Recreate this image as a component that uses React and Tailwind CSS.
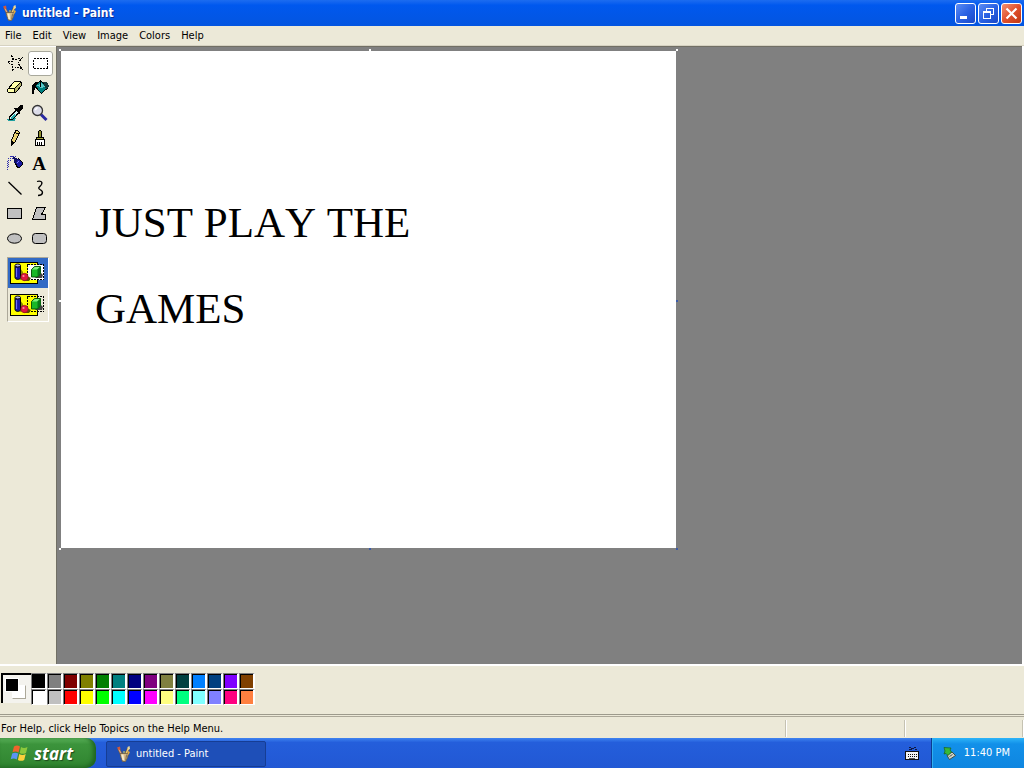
import React from "react";

const UI_FONT = "font-['DejaVu_Sans_Condensed','Noto_Sans',sans-serif]";

const TOP_COLORS = [
  ["Black", "bg-[#000000]"], ["Gray", "bg-[#808080]"], ["Maroon", "bg-[#800000]"], ["Olive", "bg-[#808000]"],
  ["Green", "bg-[#008000]"], ["Teal", "bg-[#008080]"], ["Navy", "bg-[#000080]"], ["Purple", "bg-[#800080]"],
  ["Moss", "bg-[#808040]"], ["Deep teal", "bg-[#004040]"], ["Azure", "bg-[#0080ff]"], ["Steel blue", "bg-[#004080]"],
  ["Violet", "bg-[#8000ff]"], ["Brown", "bg-[#804000]"],
];
const BOTTOM_COLORS = [
  ["White", "bg-[#ffffff]"], ["Silver", "bg-[#c0c0c0]"], ["Red", "bg-[#ff0000]"], ["Yellow", "bg-[#ffff00]"],
  ["Lime", "bg-[#00ff00]"], ["Cyan", "bg-[#00ffff]"], ["Blue", "bg-[#0000ff]"], ["Magenta", "bg-[#ff00ff]"],
  ["Cream", "bg-[#ffff80]"], ["Mint", "bg-[#00ff80]"], ["Ice", "bg-[#80ffff]"], ["Lavender", "bg-[#8080ff]"],
  ["Rose", "bg-[#ff0080]"], ["Orange", "bg-[#ff8040]"],
];

function PaintIcon() {
  return (
    <svg viewBox="0 0 16 16" className="size-4 shrink-0" aria-hidden="true">
      <path d="M2.500 2.500l3.500 7M12.500 2L9.500 9M8 5v4" fill="none" stroke="#6b5a48" strokeWidth="2.600" />
      <path d="M2.500 2.500l3.500 7" stroke="#e0a080" strokeWidth="1.400" />
      <path d="M12.500 2L9.500 9" stroke="#f0cc70" strokeWidth="1.500" />
      <path d="M8 5v4" stroke="#8fc3b0" strokeWidth="1.200" />
      <path d="M1 1.500l3-1 .5 3-2 .5z" fill="#d0583c" />
      <path d="M11.500 1l2-1 .5 3-2 1z" fill="#e8d8a0" />
      <path d="M4 7.500h8.500l-1 4-2 4h-3l-1.500-4z" fill="#d8bc88" stroke="#6b5c45" strokeWidth=".8" />
      <path d="M5.500 8.500l1 5.500h1.500l-.5-5.500z" fill="#f7ecd0" />
      <path d="M10 8.500l-1 6h1l1.500-6z" fill="#8c7b5c" />
      <path d="M12 5l2 1-1.500 3-1-2z" fill="#e0a840" />
    </svg>
  );
}

function ToolSvg({ children, crisp = true }) {
  return (
    <svg viewBox="0 0 25 25" className="size-[25px]" fill="none" stroke="#000" shapeRendering={crisp ? "crispEdges" : "auto"} aria-hidden="true">
      {children}
    </svg>
  );
}

const TOOLS = [
  { name: "Free-Form Select", art: (
    <ToolSvg><path d="M9.500 4.500l2.500 4.500 8-2-4 5 4 6-6-2-4 4 .5-6-5-3 5-1z" strokeDasharray="2 1" /></ToolSvg>
  ) },
  { name: "Select", selected: true, art: (
    <ToolSvg><rect x="5.500" y="7.500" width="14" height="10" strokeDasharray="2 1" /></ToolSvg>
  ) },
  { name: "Eraser", art: (
    <ToolSvg>
      <path d="M5.500 13.500l6-7 1-1h6l1 1v3l-6 7h-7l-1-1z" fill="#ffffa8" />
      <path d="M12.500 13.500l6.500-7v3l-6 7z" fill="#b8b870" stroke="none" />
      <path d="M5.500 12.500h7l6.500-6.500M12.500 13v3" />
    </ToolSvg>
  ) },
  { name: "Fill With Color", art: (
    <ToolSvg>
      <path d="M12.500 4.500l7 7.500-6 5.500-7-7.500z" fill="#008080" />
      <path d="M9.500 9.500l3.500-3 4 4.500-4 1z" fill="#5cc8c8" stroke="none" />
      <path d="M12.500 4.500v6" />
      <path d="M4 9l4-3 3 1-4 3-1 8h-2z" fill="#000" stroke="none" />
      <path d="M15 6l4 0 2 4-3 3z" fill="#183838" stroke="none" />
    </ToolSvg>
  ) },
  { name: "Pick Color", art: (
    <ToolSvg>
      <path d="M5 18h5l4-1-1 3H6z" fill="#20a0a0" stroke="none" />
      <path d="M7.500 18.500v-2.500l7-7 2.500 2.500-7 7z" fill="#d8f4f4" />
      <path d="M8 17l4-4 2 1-4 4z" fill="#28a8a8" stroke="none" />
      <path d="M12 7h3l3-3h2l1 1v2l-3 3v3h-1l-5-5z" fill="#000" stroke="none" />
    </ToolSvg>
  ) },
  { name: "Magnifier", art: (
    <ToolSvg crisp={false}>
      <path d="M13 13.500l5.500 5.500" stroke="#2828a0" strokeWidth="3" />
      <circle cx="9.500" cy="9.500" r="5" fill="#dcdce8" stroke="#333" strokeWidth="1.300" />
      <path d="M7 9l2.500-2.500" stroke="#fff" strokeWidth="1.500" />
    </ToolSvg>
  ) },
  { name: "Pencil", art: (
    <ToolSvg>
      <path d="M9.500 19.500v-5l4-10h2l2 2-4 9z" fill="#e8d070" />
      <path d="M9 15v5l4-4z" fill="#000" stroke="none" />
      <path d="M13.500 6.500l3 2" />
    </ToolSvg>
  ) },
  { name: "Brush", art: (
    <ToolSvg>
      <path d="M10.500 11.500v-6l1-1h1l1 1v6" fill="#909030" />
      <path d="M8.500 11.500h7v3h-7z" fill="#a8a840" />
      <path d="M7.500 13.500h9v6h-9z" fill="#fff" />
      <path d="M9.500 16v3M11.500 16v3M13.500 16v3" />
    </ToolSvg>
  ) },
  { name: "Airbrush", art: (
    <ToolSvg>
      <path d="M5.500 10v9M6.500 7v9M8.500 5v5M10.500 5v3M14 5.500H8" stroke="#3030b0" strokeDasharray="1 1" />
      <path d="M12.500 10.500l4-3 4 4v2l-3 3h-2z" fill="#1818a0" />
      <path d="M10 7l2-1 4 2-2 4-2 0v-3z" fill="#101060" stroke="none" />
      <path d="M15 12l2-2" stroke="#8080ff" />
    </ToolSvg>
  ) },
  { name: "Text", art: (
    <span className="pr-[3px] font-['Liberation_Serif',serif] text-[19px] leading-none font-bold text-black">A</span>
  ) },
  { name: "Line", art: <ToolSvg crisp={false}><path d="M6.500 6l13 12.500" strokeWidth="1.300" /></ToolSvg> },
  { name: "Curve", art: (
    <ToolSvg crisp={false}><path d="M9 5.500c3-1 6 0 4.500 3-1.500 2.500-4.500 3-1.500 5 4 2 3 6-2 6" strokeWidth="1.300" /></ToolSvg>
  ) },
  { name: "Rectangle", art: <ToolSvg><rect x="5.500" y="7.500" width="14" height="10" fill="#c0c0c0" /></ToolSvg> },
  { name: "Polygon", art: (
    <ToolSvg><path d="M8.500 6.500h9l-4 7h4v5H4.500z" fill="#c0c0c0" /></ToolSvg>
  ) },
  { name: "Ellipse", art: <ToolSvg crisp={false}><ellipse cx="12.500" cy="12.500" rx="7" ry="4.700" fill="#c0c0c0" /></ToolSvg> },
  { name: "Rounded Rectangle", art: (
    <ToolSvg crisp={false}><rect x="4.500" y="7.500" width="14" height="10" rx="3" fill="#c0c0c0" /></ToolSvg>
  ) },
];

function OverlayArt({ opaque }) {
  return (
    <svg viewBox="0 0 38 26" className="h-[26px] w-[38px]" aria-hidden="true">
      <rect x="1.500" y="2.500" width="27" height="21" fill="#ffff00" stroke="#000" shapeRendering="crispEdges" />
      <rect x="18.500" y="4.500" width="16" height="15" fill={opaque ? "#fff" : "none"} stroke="#000" strokeDasharray="2 1" shapeRendering="crispEdges" />
      <path d="M11 8l3 4v7l-3 1z" fill="#8a8a00" />
      <path d="M6 6v11.500c0 2.500 5.500 2.500 5.500 0V6z" fill="#1818a8" stroke="#000" />
      <path d="M7.500 8v9" stroke="#7070ff" strokeWidth="1.200" />
      <ellipse cx="8.750" cy="5.500" rx="2.750" ry="1.500" fill="#b8b8f0" stroke="#000" />
      <path d="M14 21l6 0 2-3-4-2z" fill="#605000" />
      <circle cx="15.500" cy="17" r="3.700" fill="#e01840" stroke="#801020" strokeWidth=".6" />
      <circle cx="14.500" cy="16" r="1.100" fill="#ff90a0" />
      <path d="M26 18l7 0 1-3-3-3z" fill="#444" />
      <path d="M22.500 9.500l3-3h6v7l-3 3.500h-6z" fill="#18b828" stroke="#004800" strokeWidth=".9" />
      <path d="M23 9.500l2.800-2.500h5l-2.500 2.500z" fill="#80f080" />
      <path d="M28.500 9.500l3-3v7l-3 3.500z" fill="#087818" />
    </svg>
  );
}

function Swatches({ colors }) {
  return (
    <div className="flex">
      {colors.map(([name, bg]) => (
        <button key={name} type="button" aria-label={name} className="size-4 border-t border-r-2 border-b border-l border-t-[#808080] border-r-white border-b-white border-l-[#808080] p-0">
          <span className={`block size-full border-t border-l border-black ${bg}`} />
        </button>
      ))}
    </div>
  );
}

function CaptionButton({ label, color, children }) {
  return (
    <button type="button" aria-label={label} className={`size-[21px] rounded-[3px] border border-white bg-linear-to-br ${color}`}>
      <svg viewBox="0 0 19 19" className="size-[19px]" fill="none" stroke="#fff" aria-hidden="true">{children}</svg>
    </button>
  );
}

function TitleBar() {
  return (
    <header className="flex h-[26px] items-center gap-1 bg-linear-to-b from-[#1c6cf0] via-[#0058ee] via-20% to-[#0355e0] pr-[2px] pl-[2px]">
      <PaintIcon />
      <h1 className="flex-1 font-['DejaVu_Sans_Condensed',sans-serif] text-[12px] leading-4 font-bold text-white [text-shadow:1px_1px_#0a2f9a]">untitled - Paint</h1>
      <div className="flex gap-[2px]">
        <CaptionButton label="Minimize" color="from-[#5c8cf4] via-[#2a62e4] to-[#1a48c8]">
          <path d="M4 13.500h7" strokeWidth="3" />
        </CaptionButton>
        <CaptionButton label="Restore" color="from-[#5c8cf4] via-[#2a62e4] to-[#1a48c8]">
          <path d="M4.500 8.500h7v6h-7zM4 7.500h8M7.500 7V4.500h7v6H12M7 4.500h8" shapeRendering="crispEdges" />
        </CaptionButton>
        <CaptionButton label="Close" color="from-[#f09070] via-[#e0502c] to-[#c03810]">
          <path d="M4.500 4.500l10 10M14.500 4.500l-10 10" strokeWidth="2.200" />
        </CaptionButton>
      </div>
    </header>
  );
}

function ToolBox() {
  return (
    <aside aria-label="Tools" className="w-14 shrink-0 border-t border-white pt-1 pl-[2px]">
      <div className="grid grid-cols-[25px_25px] gap-x-[1px]">
        {TOOLS.map((tool) => (
          <button
            key={tool.name}
            type="button"
            aria-label={tool.name}
            aria-pressed={Boolean(tool.selected)}
            className={`flex size-[25px] items-center justify-center rounded-[3px] ${tool.selected ? "bg-white outline outline-offset-[-1px] outline-[#a8a89c]" : ""}`}
          >
            {tool.art}
          </button>
        ))}
      </div>
      <div className="mt-[6px] ml-[5px] flex w-[42px] flex-col border border-[#aca899] border-r-white border-b-white">
        <button type="button" aria-label="Opaque background" aria-pressed="true" className="flex h-[30px] items-center justify-center bg-[#316ac5]">
          <OverlayArt opaque />
        </button>
        <button type="button" aria-label="Transparent background" aria-pressed="false" className="flex h-[33px] items-center justify-center">
          <OverlayArt />
        </button>
      </div>
    </aside>
  );
}

function Handle({ place, light }) {
  return <span className={`absolute size-[2px] ${light ? "bg-white" : "bg-[#3c5ca8]"} ${place}`} />;
}

function WorkArea() {
  return (
    <main className="flex-1 overflow-hidden border-t border-l border-[#716f64] bg-[#808080] pt-1 pl-1">
      <div className="relative h-[497px] w-[615px] bg-white pt-[129px] pl-[34px]">
        <p className="font-['Liberation_Serif',serif] text-[43px] leading-[86px] text-black [font-kerning:none]">
          JUST PLAY THE
          <br />
          GAMES
        </p>
        <Handle light place="-top-[2px] -left-[2px]" />
        <Handle light place="-top-[2px] left-1/2" />
        <Handle light place="-top-[2px] -right-[2px]" />
        <Handle light place="top-1/2 -left-[2px]" />
        <Handle place="top-1/2 -right-[2px]" />
        <Handle light place="-bottom-[2px] -left-[2px]" />
        <Handle place="-bottom-[2px] left-1/2" />
        <Handle place="-right-[2px] -bottom-[2px]" />
      </div>
    </main>
  );
}

function ColorBox() {
  return (
    <section aria-label="Colors" className="flex h-[50px] items-start border-t-2 border-white pt-[7px] pl-[1px]">
      <div className="flex size-[30px] items-start border-t-2 border-l-2 border-t-black border-l-black bg-[#f4f3ee] pt-[3px] pl-[2px]">
        <div className="grid">
          <span className="col-start-1 row-start-1 mt-[7px] ml-[7px] size-[14px] border border-white border-r-[#aca899] border-b-[#aca899] bg-white" />
          <span className="z-10 col-start-1 row-start-1 size-[14px] border border-white bg-black" />
        </div>
      </div>
      <div>
        <Swatches colors={TOP_COLORS} />
        <Swatches colors={BOTTOM_COLORS} />
      </div>
    </section>
  );
}

function StatusBar() {
  return (
    <footer className="flex h-6 border-t border-[#9d9a8c] text-[11px] text-black">
      <div className="mt-[1px] flex flex-1 border-t border-[#aca899] pt-[3px]">
        <p className="flex-1 pl-[1px] leading-[18px]">For Help, click Help Topics on the Help Menu.</p>
        <span className="mb-[1px] w-[119px] border-l border-[#c5c2b2] shadow-[inset_1px_0_#fff]" />
        <span className="mb-[1px] w-[118px] border-l border-[#c5c2b2] shadow-[inset_1px_0_#fff]" />
        <span className="mb-[1px] w-[2px] border-l border-[#c5c2b2] bg-white" />
      </div>
    </footer>
  );
}

function TaskBar() {
  return (
    <nav aria-label="Taskbar" className="flex h-[30px] items-stretch bg-linear-to-b from-[#3f83f0] via-[#245edb] via-15% to-[#2258d4] text-[11px] text-white">
      <button type="button" className="flex w-24 items-center gap-1 rounded-r-[10px] bg-linear-to-b from-[#5cb45c] via-[#3c943c] via-20% to-[#2f842f] pl-[10px] shadow-[inset_-3px_-1px_4px_#1f6420]">
        <svg viewBox="0 0 20 20" className="size-5" aria-hidden="true">
          <path d="M4 3.500c2.300-1.400 4-1.200 6 0L8.500 9.500c-2-1.200-3.800-1.300-6-.2z" fill="#f0642c" />
          <path d="M11 4c2 1.200 4 1.200 6.500 0L16 10c-2.300 1.200-4.200 1.100-6.300-.1z" fill="#8cc83c" />
          <path d="M2.200 10.500c2.200-1.200 4-1 6 .1L6.700 16.500c-2-1.100-3.800-1.300-6-.2z" fill="#5a94f4" />
          <path d="M9.300 11c2.100 1.200 4 1.300 6.400.1L14.200 17c-2.300 1.200-4.200 1.100-6.300-.1z" fill="#fcd03c" />
        </svg>
        <span className="font-['Open_Sans','Noto_Sans',sans-serif] text-[17px] leading-none font-bold italic [text-shadow:1px_1px_1px_#1c4a1c]">start</span>
      </button>
      <button type="button" className="mt-[3px] mb-[1px] ml-[10px] flex w-40 items-center gap-1 rounded-[2px] border border-[#163d94] bg-[#1e4fb8] pl-[9px] text-left">
        <PaintIcon />
        <span>untitled - Paint</span>
      </button>
      <div className="flex flex-1 items-center justify-end pr-[12px]">
        <svg viewBox="0 0 14 14" className="size-[14px]" role="img" aria-label="Keyboard" shapeRendering="crispEdges">
          <path d="M4 1.500h2M6 2.500h3M9 1.500h2M10 3.500h2M4 3.500h3" stroke="#101840" />
          <path d="M.5 5.500h13v8H.5z" fill="#f4f4f4" stroke="#111" />
          <path d="M3 8.500h9M3 10.500h9" stroke="#111" strokeDasharray="1 1" />
          <path d="M4 12h6" stroke="#555" />
        </svg>
      </div>
      <div className="flex items-center gap-2 border-l border-[#0b3c90] bg-linear-to-b from-[#2cb4f8] via-[#1290e9] via-20% to-[#0f86e0] pr-[14px] pl-[10px] shadow-[inset_1px_0_#30b0f0]">
        <svg viewBox="0 0 14 14" className="size-[14px]" role="img" aria-label="Safely remove hardware">
          <path d="M5 9.500l5-3.500 3.500 3.500-6 4z" fill="#d0d4c8" stroke="#3c4438" strokeWidth=".9" />
          <path d="M7.500 10.500l3-2" stroke="#555" />
          <path d="M2 1.500l7 .5-1 2 1.500 2-3.500 3.500-2-2-2 .5 1-3z" fill="#38b838" stroke="#186018" strokeWidth=".7" />
        </svg>
        <time>11:40 PM</time>
      </div>
    </nav>
  );
}

export default function App() {
  return (
    <div className={`flex min-h-screen flex-col bg-[#ece9d8] ${UI_FONT}`}>
      <TitleBar />
      <nav aria-label="Menu" className="flex h-5 items-center border-b border-[#d6d2c2] text-[11px] text-black">
        {["File", "Edit", "View", "Image", "Colors", "Help"].map((item) => (
          <button key={item} type="button" className="pr-[6px] pl-[5px] leading-4">{item}</button>
        ))}
      </nav>
      <div className="flex flex-1 border-r-2 border-white">
        <ToolBox />
        <WorkArea />
      </div>
      <ColorBox />
      <StatusBar />
      <TaskBar />
    </div>
  );
}
